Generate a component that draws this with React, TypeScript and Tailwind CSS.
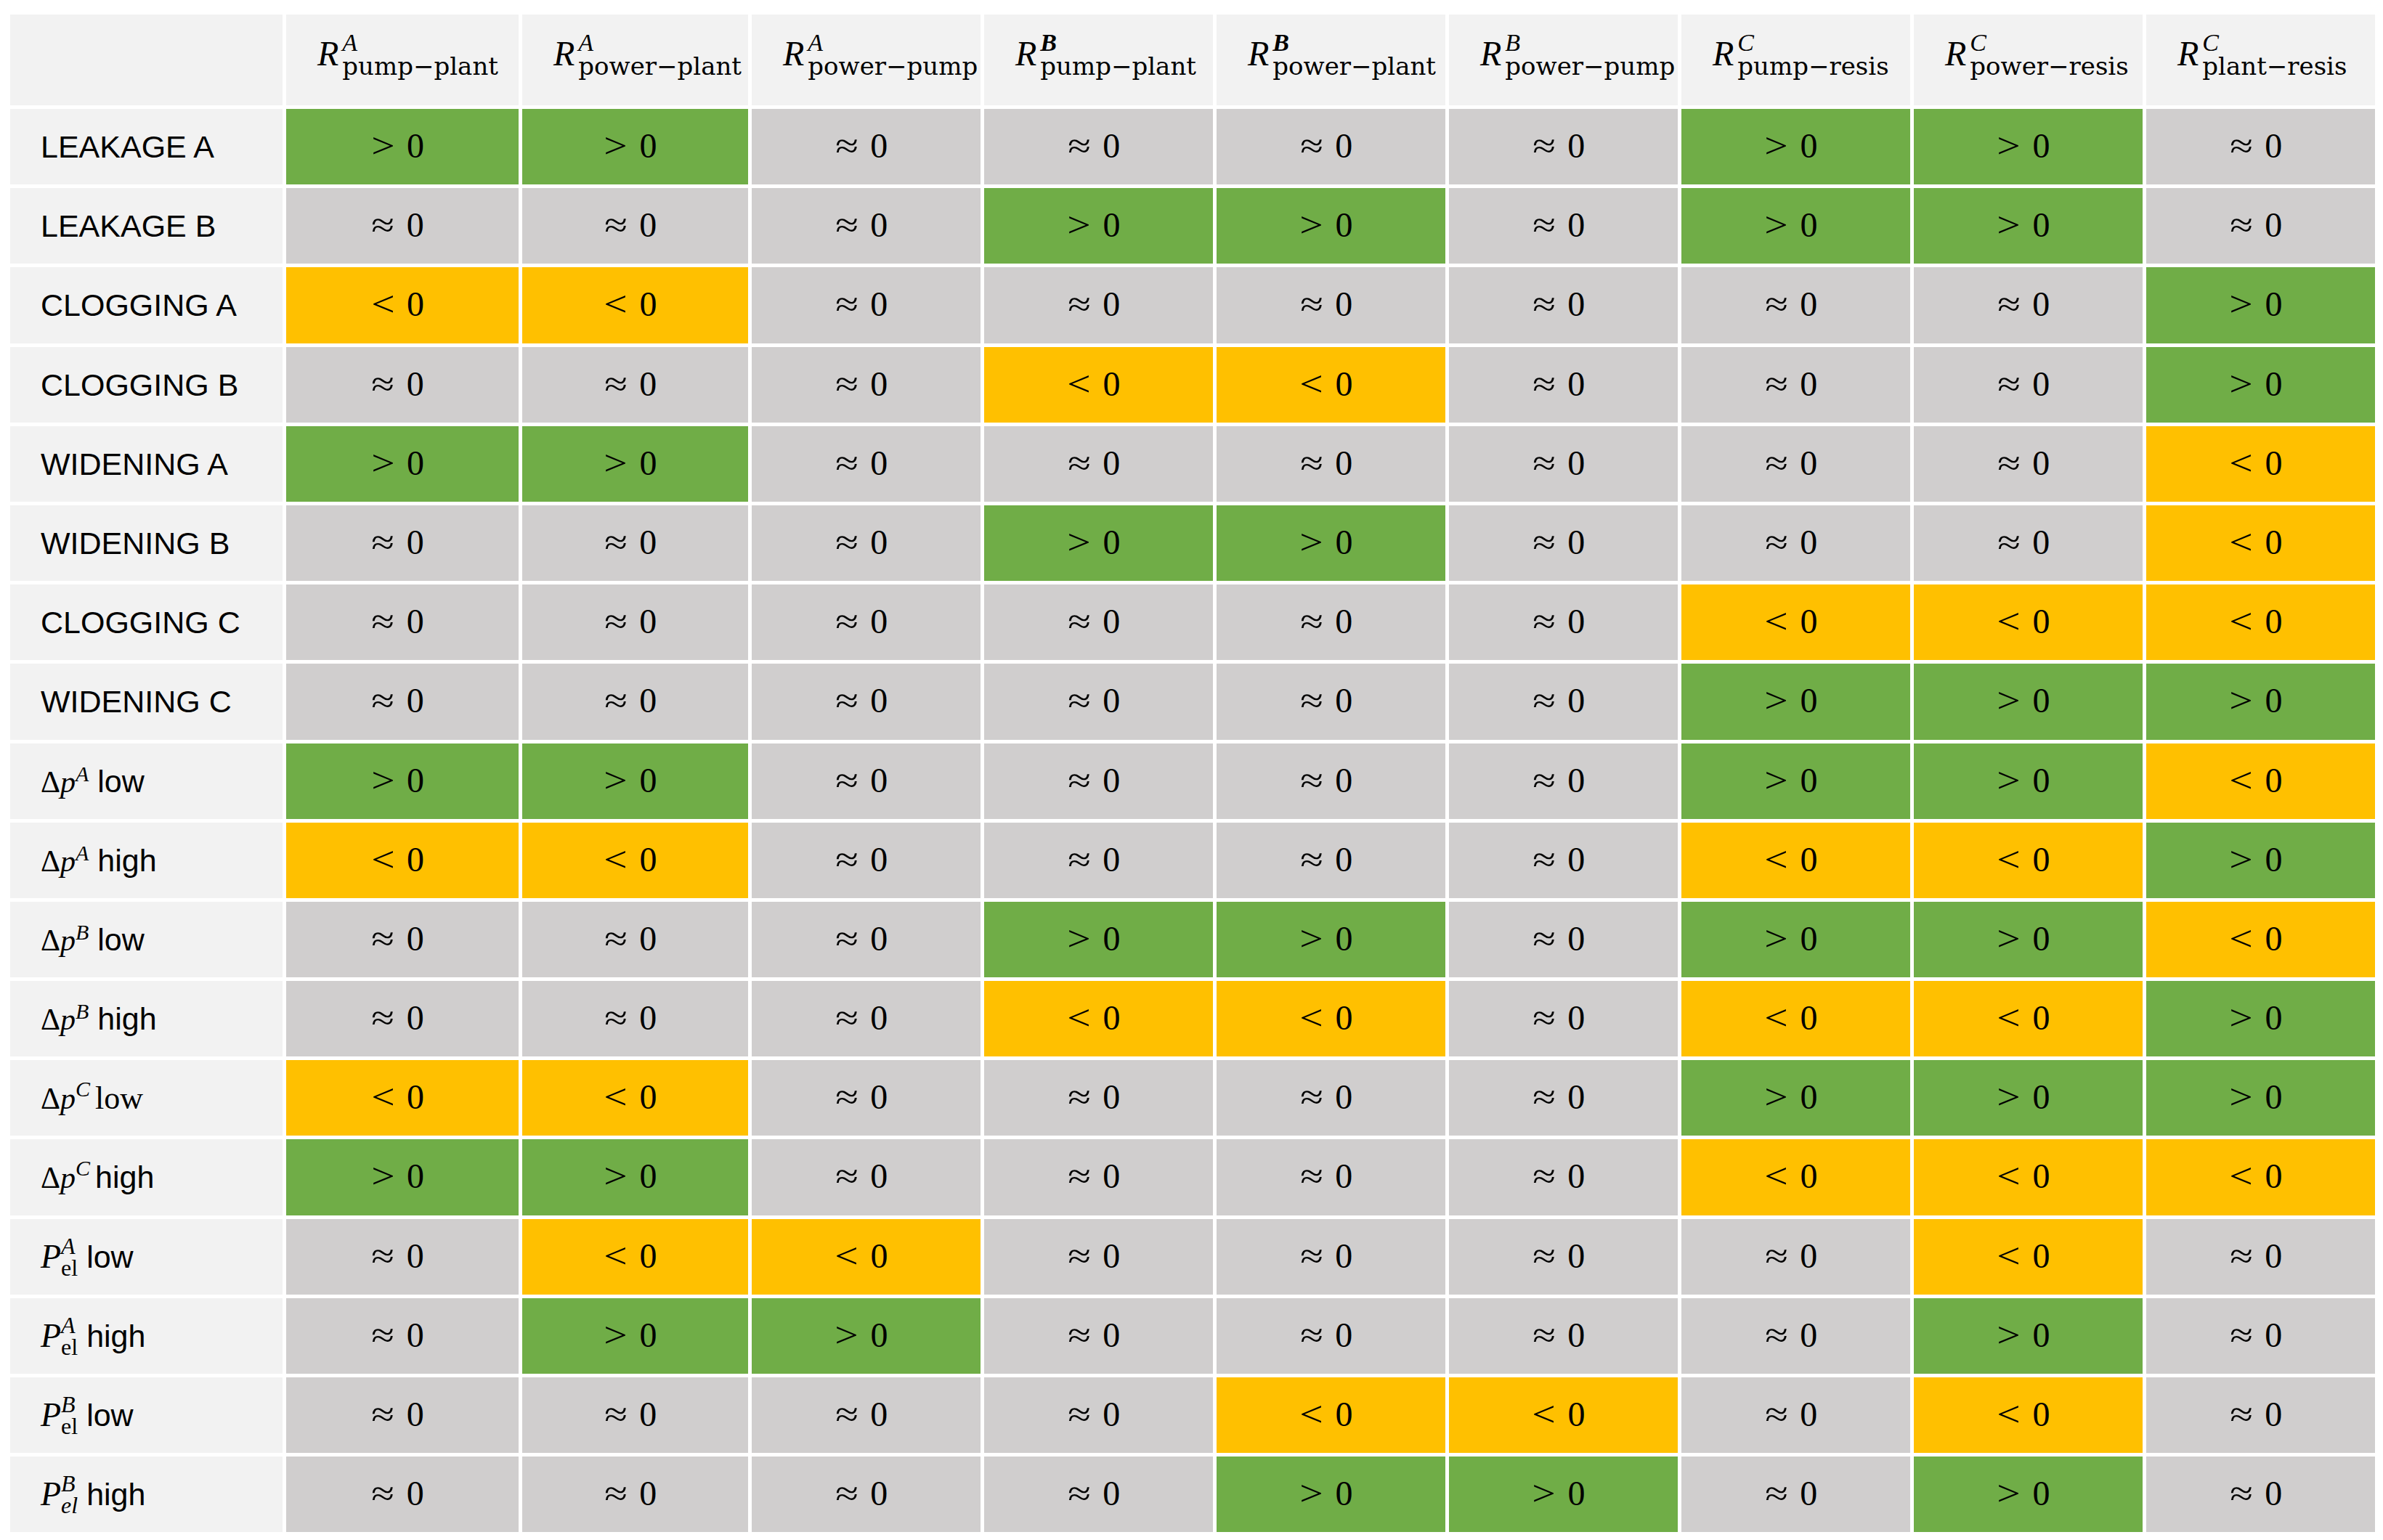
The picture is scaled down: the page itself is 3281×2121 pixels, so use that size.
import React from "react";

type Cell = "g" | "y" | "n";

const heads: { sup: string; sub: string; bold?: boolean }[] = [
  { sup: "A", sub: "pump−plant" },
  { sup: "A", sub: "power−plant" },
  { sup: "A", sub: "power−pump" },
  { sup: "B", sub: "pump−plant", bold: true },
  { sup: "B", sub: "power−plant", bold: true },
  { sup: "B", sub: "power−pump" },
  { sup: "C", sub: "pump−resis" },
  { sup: "C", sub: "power−resis" },
  { sup: "C", sub: "plant−resis" },
];

const bg: Record<Cell, string> = {
  g: "bg-[#70ad47]",
  y: "bg-[#ffc000]",
  n: "bg-[#d0cece]",
};

const sym: Record<Cell, string> = { g: ">", y: "<", n: "≈" };

function Dp({ s, lift = 15 }: { s: string; lift?: number }) {
  return (
    <>
      <span className="font-['Liberation_Serif',serif] text-[42px]">
        Δ<span className="italic">p</span>
      </span>
      <span
        className={`relative font-['Liberation_Serif',serif] italic text-[30px] ${
          lift === 17 ? "-top-[17px]" : "-top-[15px]"
        }`}
      >
        {s}
      </span>
    </>
  );
}

function Pel({ s, italicSub }: { s: string; italicSub?: boolean }) {
  return (
    <>
      <span className="font-['Liberation_Serif',serif] italic text-[46px]">P</span>
      <span className="relative -top-[19px] inline-flex flex-col font-['Liberation_Serif',serif] text-[32px] leading-[30px]">
        <span className="italic">{s}</span>
        <span className={italicSub ? "italic" : ""}>el</span>
      </span>
    </>
  );
}

const rows: { label: React.ReactNode; v: string }[] = [
  { label: "LEAKAGE A", v: "ggnnnnggn" },
  { label: "LEAKAGE B", v: "nnnggnggn" },
  { label: "CLOGGING A", v: "yynnnnnng" },
  { label: "CLOGGING B", v: "nnnyynnng" },
  { label: "WIDENING A", v: "ggnnnnnny" },
  { label: "WIDENING B", v: "nnnggnnny" },
  { label: "CLOGGING C", v: "nnnnnnyyy" },
  { label: "WIDENING C", v: "nnnnnnggg" },
  { label: <><Dp s="A" /> low</>, v: "ggnnnnggy" },
  { label: <><Dp s="A" /> high</>, v: "yynnnnyyg" },
  { label: <><Dp s="B" /> low</>, v: "nnnggnggy" },
  { label: <><Dp s="B" /> high</>, v: "nnnyynyyg" },
  {
    label: (
      <>
        <Dp s="C" lift={17} />
        <span className="ml-[7px] font-['Liberation_Serif',serif] text-[44px]">low</span>
      </>
    ),
    v: "yynnnnggg",
  },
  {
    label: (
      <>
        <Dp s="C" lift={17} />
        <span className="ml-[7px]">high</span>
      </>
    ),
    v: "ggnnnnyyy",
  },
  { label: <><Pel s="A" /> low</>, v: "nyynnnnyn" },
  { label: <><Pel s="A" /> high</>, v: "nggnnnngn" },
  { label: <><Pel s="B" /> low</>, v: "nnnnyynyn" },
  { label: <><Pel s="B" italicSub /> high</>, v: "nnnnggngn" },
];

function Head({ sup, sub, bold }: { sup: string; sub: string; bold?: boolean }) {
  return (
    <div className="bg-[#f2f2f2] pl-[43px] pt-[30px] whitespace-nowrap font-['Liberation_Serif',serif] text-[48px] leading-[48px] text-black">
      <span className="italic">R</span>
      <span className="relative -top-[20px] ml-[5px] inline-flex flex-col items-start">
        <span className={`italic text-[34px] leading-[34px] ${bold ? "font-bold" : ""}`}>{sup}</span>
        <span className="font-['DejaVu_Serif',serif] text-[34px] leading-[30px]">{sub}</span>
      </span>
    </div>
  );
}

export default function App() {
  return (
    <div className="w-[3281px] h-[2121px] bg-white pl-[14px] pt-[20px]">
      <div className="grid grid-cols-[375px_320px_311px_repeat(7,315px)] grid-rows-[125px_repeat(18,104.2px)] gap-[5px]">
        <div className="bg-[#f2f2f2]" />
        {heads.map((h, i) => (
          <Head key={i} {...h} />
        ))}
        {rows.map((r, ri) => (
          <React.Fragment key={ri}>
            <div className="bg-[#f2f2f2] pl-[42px] pt-[28px] whitespace-nowrap font-['Liberation_Sans',Arial,sans-serif] text-[43px] leading-[48px] text-black">
              {r.label}
            </div>
            {r.v.split("").map((c, ci) => (
              <div
                key={ci}
                className={`${bg[c as Cell]} flex justify-center items-start pt-[27px] pr-[10px] font-['Liberation_Serif',serif] text-[48px] leading-[48px] text-black`}
              >
                <span className="inline-block scale-x-[1.2]">{sym[c as Cell]}</span>
                <span className="ml-[19px]">0</span>
              </div>
            ))}
          </React.Fragment>
        ))}
      </div>
    </div>
  );
}
